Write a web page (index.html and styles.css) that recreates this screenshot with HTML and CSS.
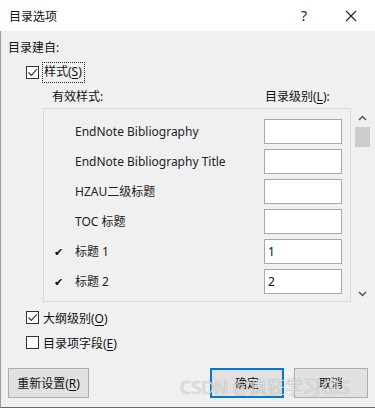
FILE: index.html
```
<!DOCTYPE html>
<html lang="zh-CN">

<head>
    <meta charset="UTF-8">
    <meta name="viewport" content="width=device-width, initial-scale=1.0">
    <title>目录选项</title>
    <link rel="stylesheet" href="styles.css">
</head>

<body>
    <div class="dialog">
        <!-- Title bar -->
        <div class="titlebar">
            <span class="title">目录选项</span>
            <span class="help">?</span>
            <span class="close">
                <svg width="12" height="12" viewBox="0 0 12 12"><path d="M1 1L11 11M11 1L1 11" stroke="#222" stroke-width="1.1" fill="none"/></svg>
            </span>
        </div>

        <div class="content">
            <div class="group-label">目录建自:</div>

            <div class="check-row styles-row">
                <span class="box"><svg width="11" height="11" viewBox="0 0 11 11"><path d="M1.5 5.5L4.3 8.3L9.8 2.3" stroke="#333" stroke-width="1.2" fill="none"/></svg></span>
                <span class="focus">样式(<u>S</u>)</span>
            </div>

            <div class="heads">
                <span>有效样式:</span>
                <span>目录级别(<u>L</u>):</span>
            </div>

            <div class="panel">
                <div class="list" id="list"></div>
                <div class="scrollbar">
                    <svg class="arrow" width="9" height="6" viewBox="0 0 9 6"><path d="M1 5L4.5 1.5L8 5" stroke="#555" stroke-width="1.5" fill="none"/></svg>
                    <div class="thumb"></div>
                    <div class="track"></div>
                    <svg class="arrow" width="9" height="6" viewBox="0 0 9 6"><path d="M1 1L4.5 4.5L8 1" stroke="#555" stroke-width="1.5" fill="none"/></svg>
                </div>
            </div>

            <div class="check-row opt-row">
                <span class="box"><svg width="11" height="11" viewBox="0 0 11 11"><path d="M1.5 5.5L4.3 8.3L9.8 2.3" stroke="#333" stroke-width="1.2" fill="none"/></svg></span>
                <span>大纲级别(<u>O</u>)</span>
            </div>
            <div class="check-row opt-row">
                <span class="box"></span>
                <span>目录项字段(<u>E</u>)</span>
            </div>

            <div class="buttons">
                <button class="btn reset">重新设置(<u>R</u>)</button>
                <button class="btn ok">确定</button>
                <button class="btn">取消</button>
            </div>
        </div>

        <div class="watermark">CSDN @疯狂学习GIS</div>
    </div>

    <script>
        const styles = [
            { name: "EndNote Bibliography", level: "", used: false },
            { name: "EndNote Bibliography Title", level: "", used: false },
            { name: "HZAU二级标题", level: "", used: false },
            { name: "TOC 标题", level: "", used: false },
            { name: "标题 1", level: "1", used: true },
            { name: "标题 2", level: "2", used: true }
        ];

        document.getElementById("list").innerHTML = styles.map(s => `
            <div class="row">
                <span class="mark">${s.used ? "✔" : ""}</span>
                <span class="name">${s.name}</span>
                <span class="level">${s.level}</span>
            </div>
        `).join('');
    </script>
</body>

</html>
```

FILE: styles.css
```
* {
    margin: 0;
    padding: 0;
    box-sizing: border-box;
}

body {
    font-family: "Noto Sans", "Noto Sans CJK SC", sans-serif;
    font-size: 12px;
    color: #111;
    background: #f0f0f0;
}

u {
    text-decoration-thickness: 1px;
    text-underline-offset: 2px;
}

.dialog {
    position: relative;
    width: 375px;
    height: 408px;
    overflow: hidden;
}

/* Title bar */
.titlebar {
    height: 31px;
    background: #ffffff;
    display: flex;
    align-items: center;
    padding-left: 9px;
}

.titlebar .title {
    flex: 1;
    font-size: 12px;
}

.titlebar .help {
    width: 44px;
    font-size: 14px;
    color: #222;
}

.titlebar .close {
    width: 30px;
    display: flex;
    align-items: center;
}

/* Body */
.content {
    height: 377px;
    background: #f0f0f0;
    border-left: 1px solid #9a9a9a;
    border-bottom: 1px solid #6a6a6a;
    padding: 9px 0 0 7px;
}

.group-label {
    line-height: 16px;
}

.check-row {
    display: flex;
    align-items: center;
    gap: 4px;
    padding-left: 18px;
}

.box {
    width: 13px;
    height: 13px;
    border: 1px solid #333;
    background: #fff;
    display: flex;
    align-items: center;
    justify-content: center;
}

.styles-row {
    margin-top: 5px;
    height: 22px;
}

.styles-row .focus {
    border: 1px dotted #222;
    padding: 1px 2px 2px 1px;
    margin-left: -1px;
    line-height: 16px;
}

.heads {
    display: flex;
    margin-top: 6px;
    line-height: 16px;
}

.heads span:first-child {
    width: 257px;
    padding-left: 44px;
}

/* Style list */
.panel {
    display: flex;
    margin-left: 35px;
    margin-top: 3px;
    height: 194px;
}

.list {
    width: 308px;
    border: 1px solid #dadada;
    padding-top: 10px;
}

.row {
    height: 30px;
    display: flex;
    align-items: flex-start;
}

.row .mark {
    width: 31px;
    padding-left: 10px;
    font-size: 11px;
    line-height: 25px;
    color: #111;
}

.row .name {
    width: 189px;
    line-height: 25px;
    color: #222;
}

.row .level {
    width: 78px;
    height: 25px;
    border: 1px solid #a8a8a8;
    background: #fff;
    padding-left: 3px;
    line-height: 23px;
}

.scrollbar {
    width: 20px;
    margin-left: 1px;
    display: flex;
    flex-direction: column;
    align-items: center;
    padding: 7px 0 5px;
}

.scrollbar .thumb {
    width: 15px;
    height: 20px;
    background: #cdcdcd;
    margin-top: 6px;
}

.scrollbar .track {
    flex: 1;
}

/* Options */
.opt-row {
    height: 25px;
}

.panel + .opt-row {
    margin-top: 3px;
}

/* Buttons */
.buttons {
    display: flex;
    margin-top: 13px;
}

.btn {
    font: inherit;
    height: 30px;
    width: 74px;
    background: #e1e1e1;
    border: 1px solid #adadad;
    color: #111;
}

.btn.reset {
    width: 81px;
    margin-right: 121px;
}

.btn.ok {
    border: 2px solid #0078d7;
    margin-right: 10px;
}

/* Watermark */
.watermark {
    position: absolute;
    left: 180px;
    top: 373px;
    font-size: 18px;
    color: rgba(255, 255, 255, 0.75);
    text-shadow: 0 0 1px rgba(0, 0, 0, 0.45);
    white-space: nowrap;
}
```
